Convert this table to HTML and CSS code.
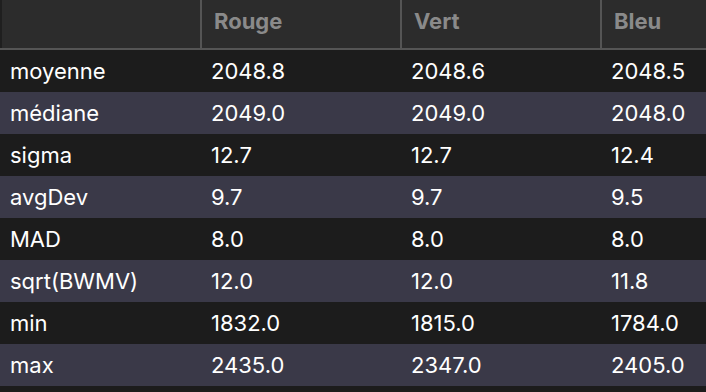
FILE: index.html
```html
<!DOCTYPE html>
<html lang="fr">
<head>
<meta charset="utf-8">
<link rel="stylesheet" href="styles.css">
</head>
<body>
<div class="table">
  <div class="head">
    <div class="hcell first"></div>
    <div class="hcell">Rouge</div>
    <div class="hcell">Vert</div>
    <div class="hcell">Bleu</div>
  </div>
  <div class="row"><div class="cell">moyenne</div><div class="cell">2048.8</div><div class="cell">2048.6</div><div class="cell">2048.5</div></div>
  <div class="row alt"><div class="cell">médiane</div><div class="cell">2049.0</div><div class="cell">2049.0</div><div class="cell">2048.0</div></div>
  <div class="row"><div class="cell">sigma</div><div class="cell">12.7</div><div class="cell">12.7</div><div class="cell">12.4</div></div>
  <div class="row alt"><div class="cell">avgDev</div><div class="cell">9.7</div><div class="cell">9.7</div><div class="cell">9.5</div></div>
  <div class="row"><div class="cell">MAD</div><div class="cell">8.0</div><div class="cell">8.0</div><div class="cell">8.0</div></div>
  <div class="row alt"><div class="cell">sqrt(BWMV)</div><div class="cell">12.0</div><div class="cell">12.0</div><div class="cell">11.8</div></div>
  <div class="row"><div class="cell">min</div><div class="cell">1832.0</div><div class="cell">1815.0</div><div class="cell">1784.0</div></div>
  <div class="row alt"><div class="cell">max</div><div class="cell">2435.0</div><div class="cell">2347.0</div><div class="cell">2405.0</div></div>
</div>
</body>
</html>
```

FILE: styles.css
```css
html, body {
  margin: 0;
  padding: 0;
  background: #1c1c1c;
  width: 706px;
  height: 392px;
  overflow: hidden;
}
.table {
  font-family: Inter, "Liberation Sans", sans-serif;
  color: #ffffff;
}
.head {
  display: grid;
  grid-template-columns: 200px 200px 200px 106px;
  height: 48px;
  background: #2c2c2c;
  border-bottom: 2px solid #555555;
}
.hcell {
  border-left: 2px solid #555555;
  padding-left: 12px;
  font-weight: 700;
  font-size: 22px;
  color: #8a8a8a;
  line-height: 42px;
}
.hcell.first {
  border-left: 2px solid #1f1f1f;
}
.row {
  display: grid;
  grid-template-columns: 200px 200px 200px 106px;
  height: 42px;
  align-items: center;
  background: #1c1c1c;
}
.row.alt {
  background: #3a3948;
}
.cell {
  padding-left: 10px;
  font-size: 22px;
}
.cell + .cell {
  padding-left: 11px;
}
```
